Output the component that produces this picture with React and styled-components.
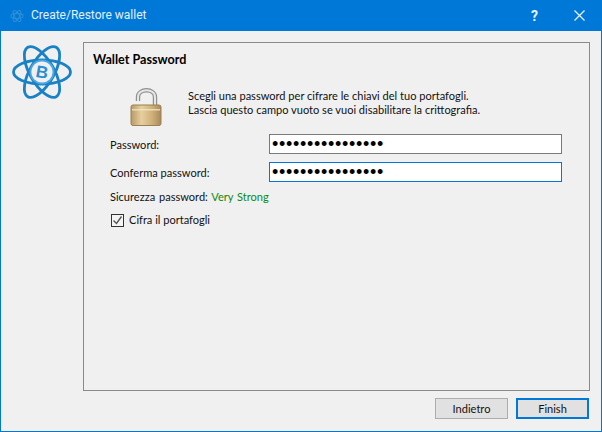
import React from "react";
import styled, { createGlobalStyle } from "styled-components";

const Global = createGlobalStyle`
  html, body { margin: 0; padding: 0; background: #f0f0f0; }
  body { font-family: Lato, Roboto, sans-serif; font-size: 11.05px; color: #111; }
`;
const Win = styled.div`
  width: 602px; height: 432px; box-sizing: border-box;
  display: flex; flex-direction: column; background: #f0f0f0;
  border: 1px solid #0078d7; border-top: 0; overflow: hidden;
`;
const TitleBar = styled.div`
  height: 31px; flex: none; background: #0078d7; color: #e4f1fb; display: flex; align-items: center;
  margin: 0 -1px; padding: 0 0 0 10px; font: 12px Roboto, sans-serif;
`;
const TitleText = styled.span` flex: 1; padding: 0 0 1px 7px; `;
const TitleButton = styled.button`
  width: 45px; height: 31px; padding: 0; border: 0; background: transparent; color: #e8f3fc;
  display: flex; align-items: center; justify-content: center; font: bold 14px Roboto, sans-serif;
`;
const Body = styled.div` flex: 1; display: flex; min-height: 0; padding: 11px 11px 0 0; `;
const Side = styled.div` width: 82px; flex: none; display: flex; justify-content: center; padding: 0 1px 0 0; box-sizing: border-box; `;
const Main = styled.div` flex: 1; display: flex; flex-direction: column; `;
const Panel = styled.section`
  height: 349px; box-sizing: border-box; border: 1px solid #8a8a8a; padding: 9px 9px 0 9px;
  display: flex; flex-direction: column;
`;
const Heading = styled.h2` margin: 0; font-size: 12.6px; font-weight: 700; line-height: 16px; color: #000; `;
const Intro = styled.div` display: flex; margin-top: 12px; height: 53px; `;
const LockBox = styled.div` width: 95px; flex: none; padding: 8px 0 0 37px; box-sizing: border-box; `;
const IntroText = styled.p` margin: 9px 0 0; line-height: 14px; white-space: nowrap; color: #111; `;
const Form = styled.div` display: grid; grid-template-columns: 159px 293px; row-gap: 8px; padding-left: 17px; margin-top: 1px; align-items: center; `;
const Label = styled.label` line-height: 16px; padding-top: 1px; `;
const Field = styled.input`
  width: 293px; height: 20px; box-sizing: border-box; border: 1px solid ${p => p.$focus ? "#0078d7" : "#7a7a7a"};
  outline: 0; background: #fff; padding: 0 2px; margin: 0; color: #000; letter-spacing: .7px;
  font: 18px "Liberation Sans", sans-serif; display: block;
`;
const Strength = styled.div` margin: 7px 0 0 17px; line-height: 16px; word-spacing: 1px; `;
const Good = styled.span` color: #0a8a12; `;
const CheckRow = styled.label` display: flex; align-items: center; gap: 5px; margin: 7px 0 0 18px; line-height: 16px; `;
const CheckBox = styled.span`
  width: 13px; height: 13px; box-sizing: border-box; border: 1px solid #333; background: #f4f4f4; display: flex;
`;
const Footer = styled.div` display: flex; justify-content: flex-end; gap: 8px; padding: 7px 1px 0 0; `;
const Btn = styled.button`
  width: 73px; height: 21px; box-sizing: border-box; padding: 0; background: #e1e1e1; color: #111;
  border: ${p => p.$primary ? "2px solid #0078d7" : "1px solid #adadad"};
  font: 11.05px Lato, Roboto, sans-serif;
`;

const Logo = () => (
  <svg width="62" height="60" viewBox="-31 -30 62 60" fill="none">
    <g stroke="#1a81c4" strokeWidth="2.8">
      <ellipse rx="28.5" ry="12" />
      <ellipse rx="28.5" ry="12" transform="rotate(60)" />
      <ellipse rx="28.5" ry="12" transform="rotate(120)" />
    </g>
    <circle r="12.5" fill="#4aa6e0" />
    <circle r="10.6" fill="#f0f0f0" />
    <text x="0" y="6" textAnchor="middle" fontFamily="Liberation Sans" fontWeight="700" fontSize="17" fill="#2a8fd0" transform="rotate(10)">B</text>
  </svg>
);
const Lock = () => (
  <svg width="32" height="39" viewBox="0 0 32 39">
    <defs>
      <linearGradient id="brass" x1="0" x2="1" y1="0" y2="0">
        <stop offset="0" stopColor="#b89a66" /><stop offset=".35" stopColor="#e6cf9e" />
        <stop offset=".7" stopColor="#cfb07a" /><stop offset="1" stopColor="#a88a58" />
      </linearGradient>
    </defs>
    <path d="M8 13V9c0-9 17-9 17 0v10" fill="none" stroke="#8f8f8f" strokeWidth="4.4" />
    <path d="M8 13V9c0-9 17-9 17 0v10" fill="none" stroke="#e6e6e6" strokeWidth="2" />
    <rect x="1" y="17" width="30" height="20.5" rx="2" fill="url(#brass)" stroke="#9a8052" />
    <rect x="2" y="21" width="28" height="1.5" fill="#f3e6c6" opacity=".8" />
  </svg>
);

export default function App() {
  return (
    <Win>
      <Global />
      <TitleBar>
        <svg width="14" height="14" viewBox="-16 -16 32 32" fill="none" stroke="#2b8fd6" strokeWidth="2.4">
          <ellipse rx="14" ry="6" /><ellipse rx="14" ry="6" transform="rotate(60)" /><ellipse rx="14" ry="6" transform="rotate(120)" />
        </svg>
        <TitleText>Create/Restore wallet</TitleText>
        <TitleButton>?</TitleButton>
        <TitleButton>
          <svg width="11" height="11" viewBox="0 0 11 11" stroke="#eef6fd" strokeWidth="1.2"><path d="M.5.5l10 10M10.5.5l-10 10" /></svg>
        </TitleButton>
      </TitleBar>
      <Body>
        <Side><Logo /></Side>
        <Main>
          <Panel>
            <Heading>Wallet Password</Heading>
            <Intro>
              <LockBox><Lock /></LockBox>
              <IntroText>
                Scegli una password per cifrare le chiavi del tuo portafogli.<br />
                Lascia questo campo vuoto se vuoi disabilitare la crittografia.
              </IntroText>
            </Intro>
            <Form>
              <Label>Password:</Label>
              <Field type="password" readOnly value="aaaaaaaaaaaaaaaa" />
              <Label>Conferma password:</Label>
              <Field $focus type="password" readOnly value="aaaaaaaaaaaaaaaa" />
            </Form>
            <Strength>Sicurezza password: <Good>Very Strong</Good></Strength>
            <CheckRow>
              <CheckBox>
                <svg width="11" height="11" viewBox="0 0 11 11" fill="none" stroke="#555" strokeWidth="1.4"><path d="M1.5 5.5l3 3 5-7" /></svg>
              </CheckBox>
              Cifra il portafogli
            </CheckRow>
          </Panel>
          <Footer>
            <Btn>Indietro</Btn>
            <Btn $primary>Finish</Btn>
          </Footer>
        </Main>
      </Body>
    </Win>
  );
}
